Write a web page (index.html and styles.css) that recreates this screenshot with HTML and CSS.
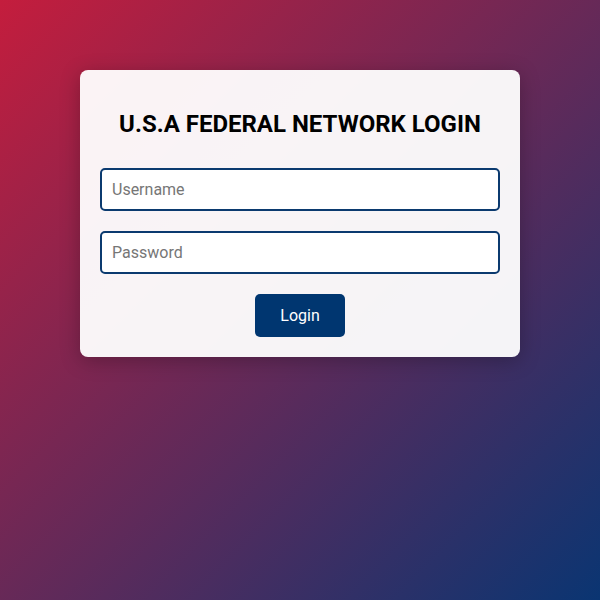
FILE: index.html
```html
<!DOCTYPE html>
<html lang="en">
<head>
<meta charset="utf-8">
<title>Login</title>
<link rel="stylesheet" href="styles.css">
</head>
<body>
<main class="page">
  <form class="card">
    <h2 class="title">U.S.A FEDERAL NETWORK LOGIN</h2>
    <input class="field" type="text" placeholder="Username">
    <input class="field" type="password" placeholder="Password">
    <button class="btn" type="button">Login</button>
  </form>
</main>
</body>
</html>
```
FILE: styles.css
```css
html, body {
  margin: 0;
  padding: 0;
  height: 100%;
}
body {
  font-family: Roboto, "Liberation Sans", sans-serif;
  background: linear-gradient(135deg, #c41d3d 0%, #0a3572 100%);
  background-attachment: fixed;
}
.page {
  display: flex;
  justify-content: center;
  padding-top: 70px;
}
.card {
  width: 440px;
  box-sizing: border-box;
  padding: 20px;
  background: rgba(255, 255, 255, 0.95);
  border-radius: 8px;
  box-shadow: 0 4px 20px rgba(0, 0, 0, 0.25);
  display: flex;
  flex-direction: column;
  align-items: center;
}
.title {
  margin: 20px 0 20px;
  font-size: 24px;
  line-height: 28px;
  font-weight: 700;
  color: #000;
}
.field {
  width: 100%;
  height: 43px;
  box-sizing: border-box;
  margin: 10px 0;
  padding: 0 10px;
  font-family: inherit;
  font-size: 16px;
  border: 2px solid #0b3a6f;
  border-radius: 5px;
  background: #fff;
  color: #000;
}
.field::placeholder {
  color: #767676;
}
.btn {
  margin-top: 10px;
  height: 43px;
  padding: 0 25px;
  font-family: inherit;
  font-size: 16px;
  color: #fff;
  background: #003670;
  border: none;
  border-radius: 5px;
}
```
